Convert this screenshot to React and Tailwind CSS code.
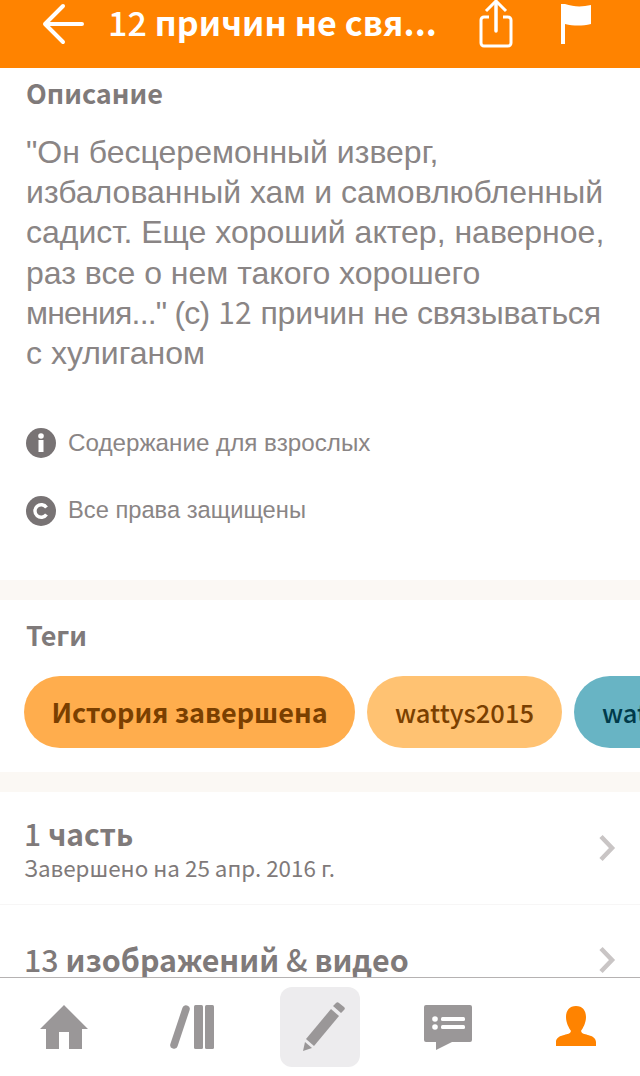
const cjk = "font-['Noto_Sans_CJK_SC',sans-serif]";
const helv = "font-['Liberation_Sans',sans-serif]";

function Chevron() {
  return (
    <svg width="18" height="28" viewBox="0 0 18 28" fill="none" className="shrink-0">
      <path d="M3 2.500l11 11.500L3 25.500" stroke="#c9c5c5" strokeWidth="4.500" />
    </svg>
  );
}

function Tag({ children, cls }) {
  return (
    <div className={`h-[72px] rounded-[36px] flex items-center justify-center shrink-0 ${cjk} ${cls}`}>
      {children}
    </div>
  );
}

function Divider() {
  return <div className="h-5 bg-[#fbf8f4] shrink-0" />;
}

export default function App() {
  return (
    <div className="w-[640px] h-[1076px] flex flex-col bg-white overflow-hidden">
      <header className="h-[68px] shrink-0 bg-[#ff8300] flex items-start relative text-white">
        <svg width="44" height="44" viewBox="0 0 44 44" fill="none" className="ml-[41px] mt-[2px] shrink-0">
          <path d="M41 22H4M22 4L4 22l18 18" stroke="#fff" strokeWidth="4" strokeLinecap="round" strokeLinejoin="round" />
        </svg>
        <div className={`ml-[23px] mt-[2px] w-[340px] text-[34px] leading-[40px] font-bold whitespace-nowrap tracking-[0.1px] ${cjk}`}>
          <span className="font-medium">12</span> причин не свя...
        </div>
        <svg width="34" height="48" viewBox="0 0 34 48" fill="none" className="absolute left-[479px] top-0">
          <path d="M17 2v29" stroke="#fff" strokeWidth="3.500" strokeLinecap="round" />
          <path d="M7 11L17 1l10 10" stroke="#fff" strokeWidth="3" fill="none" />
          <path d="M10 17H5a3 3 0 0 0-3 3v23a3 3 0 0 0 3 3h24a3 3 0 0 0 3-3V20a3 3 0 0 0-3-3h-5" stroke="#fff" strokeWidth="3" />
        </svg>
        <svg width="30" height="40" viewBox="0 0 30 40" className="absolute left-[561px] top-[4px]">
          <path d="M0 0h4v40H0z" fill="#fff" />
          <path d="M4 0c9 3 17 3 26 1v19c-9 2-17 2-26 0z" fill="#fff" />
        </svg>
      </header>

      <main className="flex-1 min-h-0 overflow-hidden">
        <section className="pt-[7px] px-[26px] h-[512px]">
          <h2 className={`text-[27px] leading-[36px] font-bold text-[#7f7a7a] ${cjk}`}>Описание</h2>
          <p className={`mt-[21px] text-[32px] leading-[40.2px] text-[#8a8585] whitespace-nowrap ${helv}`}>
            "Он бесцеремонный изверг,<br />
            избалованный хам и самовлюбленный<br />
            садист. Еще хороший актер, наверное,<br />
            раз все о нем такого хорошего<br />
            <span className="tracking-[-0.8px]">мнения..." (с)</span> <span className={`leading-[0] text-[30px] ${cjk}`}>12</span> <span className="tracking-[-0.2px]">причин не связываться</span><br />
            с хулиганом
          </p>
          <div className="mt-[55px] flex items-center h-[30px]">
            <svg width="30" height="30" viewBox="0 0 30 30" className="shrink-0">
              <circle cx="15" cy="15" r="15" fill="#787374" />
              <rect x="12.500" y="12" width="5" height="12" fill="#fff" />
              <circle cx="15" cy="8" r="2.800" fill="#fff" />
            </svg>
            <span className={`ml-3 text-[24.2px] text-[#8a8585] ${helv}`}>Содержание для взрослых</span>
          </div>
          <div className="mt-[38px] flex items-center h-[30px]">
            <svg width="30" height="30" viewBox="0 0 30 30" className="shrink-0">
              <circle cx="15" cy="15" r="15" fill="#787374" />
              <path d="M20.500 11.500a6.300 6.300 0 1 0 0 7" stroke="#fff" strokeWidth="3.400" fill="none" />
            </svg>
            <span className={`ml-3 text-[23.7px] text-[#8a8585] ${helv}`}>Все права защищены</span>
          </div>
        </section>

        <Divider />

        <section className="h-[172px] pt-[17px] pl-6">
          <h2 className={`text-[27px] leading-[36px] font-bold text-[#7f7a7a] ml-[2px] ${cjk}`}>Теги</h2>
          <div className="mt-[23px] flex gap-3">
            <Tag cls="w-[331px] bg-[#ffad4d] text-[#7a3f00] font-bold text-[27px]">История завершена</Tag>
            <Tag cls="w-[195px] bg-[#ffc272] text-[#7a3f00] font-medium text-[25.5px]">wattys2015</Tag>
            <Tag cls="w-[195px] bg-[#68b4c4] text-[#003a4a] font-medium text-[25.5px]">wattys2015</Tag>
          </div>
        </section>

        <Divider />

        <section className="h-[113px] px-6 flex items-center justify-between border-b border-[#f7f6f6]">
          <div>
            <div className={`text-[30px] leading-[38px] font-bold text-[#7f7a7a] ${cjk}`}>
              <span className="font-medium">1</span> часть
            </div>
            <div className={`text-[22.4px] leading-[30px] text-[#7f7a7a] ${cjk}`}>Завершено на 25 апр. 2016 г.</div>
          </div>
          <Chevron />
        </section>

        <section className="px-6 pt-[31px] flex items-start justify-between">
          <div className={`text-[30.4px] leading-[46px] font-bold text-[#7f7a7a] ${cjk}`}>
            <span className="font-medium">13</span> изображений <span className="font-medium">&amp;</span> видео
          </div>
          <div className="pt-[10px]"><Chevron /></div>
        </section>
      </main>

      <nav className="h-[99px] shrink-0 bg-white border-t border-[#b5b2b2] flex items-start justify-between relative">
        <div className="w-[128px] h-[98px] flex items-center justify-center">
          <svg width="48" height="46" viewBox="0 0 48 46" className="mt-[-1px]">
            <path d="M24 1L48 25H42V45H29V28H19V45H6V25H0z" fill="#9a9798" />
          </svg>
        </div>
        <div className="w-[128px] h-[98px] flex items-center justify-center">
          <svg width="46" height="46" viewBox="0 0 46 46" className="mt-[-1px]">
            <path d="M17 5L5 41" stroke="#9a9798" strokeWidth="7.500" strokeLinecap="round" />
            <rect x="25" y="1" width="9" height="44" rx="1.500" fill="#9a9798" />
            <rect x="36" y="1" width="9" height="44" rx="1.500" fill="#9a9798" />
          </svg>
        </div>
        <div className="w-[128px] h-[98px] flex items-start justify-center pt-[9px]">
          <div className="w-[80px] h-[80px] rounded-[12px] bg-[#edecee] flex items-center justify-center">
            <svg width="50" height="50" viewBox="0 0 50 50" className="ml-[1px]">
              <path d="M10 37L35 7l8 7-25 30z" fill="#9a9798" />
              <path d="M37 4l3-3a2 2 0 0 1 3 0l5 4a2 2 0 0 1 0 3l-3 3z" fill="#9a9798" />
              <path d="M9 40l7 6-9 3 2-9z" fill="#9a9798" />
            </svg>
          </div>
        </div>
        <div className="w-[128px] h-[98px] flex items-center justify-center">
          <svg width="48" height="46" viewBox="0 0 48 46" className="mt-[-1px]">
            <path d="M2 1h44a2 2 0 0 1 2 2v33a2 2 0 0 1-2 2H28L12 46V38H2a2 2 0 0 1-2-2V3a2 2 0 0 1 2-2z" fill="#9a9798" />
            <circle cx="11" cy="15" r="2.800" fill="#fff" />
            <circle cx="11" cy="23" r="2.800" fill="#fff" />
            <rect x="17" y="13" width="24" height="4" rx="1.500" fill="#fff" />
            <rect x="17" y="21" width="24" height="4" rx="1.500" fill="#fff" />
          </svg>
        </div>
        <div className="w-[128px] h-[98px] flex items-center justify-center">
          <svg width="40" height="40" viewBox="0 0 40 40" className="mt-[-2px]">
            <path d="M20 0c6.500 0 10 4.500 10 11 0 6-3 11-5 14l1 2c3 2 14 2 14 9v4H0v-4c0-7 11-7 14-9l1-2c-2-3-5-8-5-14C10 4.500 13.500 0 20 0z" fill="#ff8300" />
          </svg>
        </div>
      </nav>
    </div>
  );
}
